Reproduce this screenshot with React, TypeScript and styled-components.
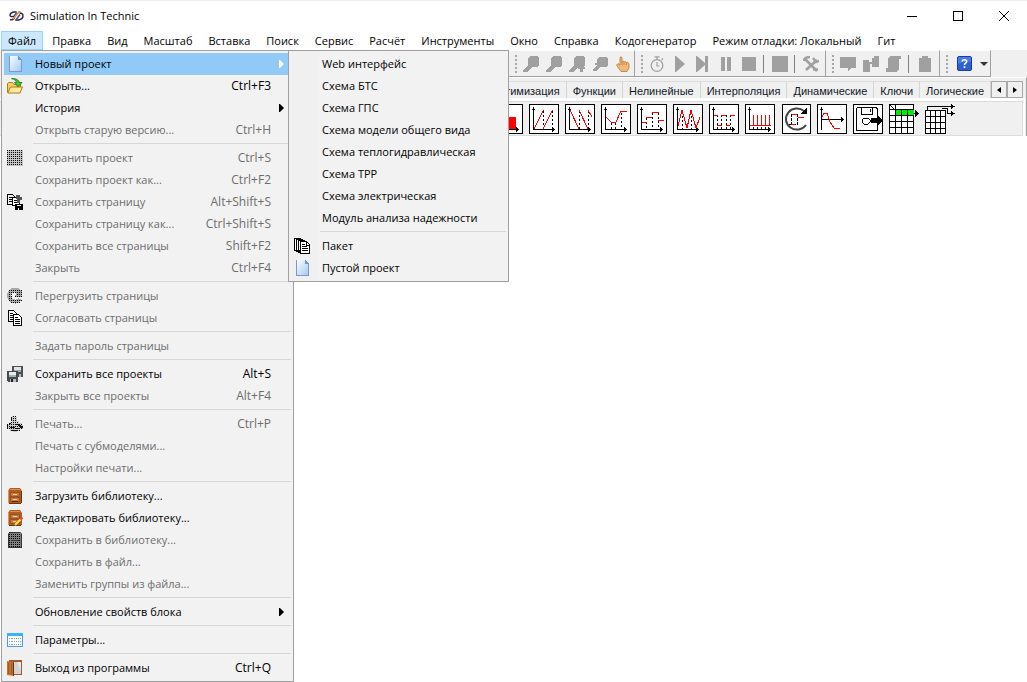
import React from "react";
import styled, { createGlobalStyle } from "styled-components";

const Global = createGlobalStyle`
  * { box-sizing: border-box; }
  body { margin: 0; background: #fff; overflow: hidden; }
  button { font: inherit; color: inherit; border: 0; margin: 0; padding: 0; background: none; text-align: left; }
  svg { display: block; flex: none; }
`;

const Window = styled.div`
  position: relative;
  min-height: 100vh;
  background: #fff;
  color: #000;
  font-family: "Open Sans", "Noto Sans", sans-serif;
  font-size: 11px;
  line-height: 16px;
`;

const TitleBar = styled.header`
  display: flex;
  align-items: center;
  height: 31px;
  border-top: 1px solid #f0f0f0;
  padding-left: 8px;
`;
const Title = styled.h1`
  flex: 1;
  margin: 0;
  padding-left: 6px;
  font-size: 11px;
  font-weight: 400;
`;
const Caption = styled.button`
  display: grid;
  place-items: center;
  width: 46px;
  height: 30px;
`;

const MenuBar = styled.nav`
  display: flex;
  gap: 2px;
  height: 19px;
  padding-left: 1px;
  white-space: nowrap;
`;
const MenuTitle = styled.button<{ $open?: boolean }>`
  padding: 0 6px;
  border: 1px solid ${(p) => (p.$open ? "#99d1ff" : "transparent")};
  background: ${(p) => (p.$open ? "#cce8ff" : "transparent")};
`;

const ToolArea = styled.div`
  background: #f0f0f0;
`;
const ToolRow = styled.div`
  display: flex;
  height: 27px;
  padding-left: 509px;
`;
const ToolGroup = styled.div<{ $tight?: boolean }>`
  display: flex;
  align-items: center;
  padding-right: ${(p) => (p.$tight ? 0 : 3)}px;
  border-top: 1px solid #fff;
  border-right: 1px solid #a0a0a0;
  border-bottom: 1px solid #a0a0a0;
`;
const Grip = styled.span`
  width: 10px;
  height: 20px;
  padding-left: 3px;
  background: radial-gradient(circle, #a8a8a8 1px, transparent 1px) 3px 0 / 2px 4px content-box no-repeat;
  background-repeat: no-repeat repeat;
`;
const ToolButton = styled.button<{ $w?: number }>`
  display: grid;
  place-items: center;
  width: ${(p) => p.$w ?? 23}px;
  height: 22px;
  color: #a0a0a0;
`;
const ToolRule = styled.span`
  width: 1px;
  height: 18px;
  margin: 0 4px 0 3px;
  background: #808080;
`;

const Palette = styled.div`
  border-right: 1px solid #a0a0a0;
  border-top: 1px solid #fff;
  padding: 3px 3px 0 0;
`;
const TabStrip = styled.div`
  display: flex;
  justify-content: flex-end;
  height: 17px;
  overflow: hidden;
  color: #101828;
  font-family: "Liberation Sans", "Noto Sans", sans-serif;
  font-size: 11px;
  line-height: 18px;
  white-space: nowrap;
`;
const Tab = styled.button`
  padding: 0 6px;
  border-top: 1px solid #dcdcdc;
  border-right: 1px solid #d5d5d5;
`;
const Scroll = styled.button`
  display: grid;
  place-items: center;
  width: 16px;
  height: 17px;
  border: 1px solid #a8a8a8;
`;
const Blocks = styled.div`
  display: flex;
  gap: 6px;
  height: 38px;
  padding: 3px 0 0 493px;
  border-top: 3px solid #fff;
  border-right: 1px solid #dcdcdc;
  border-bottom: 1px solid #dcdcdc;
  box-shadow: inset 0 1px #dcdcdc, 2px 0 #fff;
`;
const Block = styled.button`
  width: 30px;
  height: 30px;
`;

const Menu = styled.div<{ $sub?: boolean }>`
  position: absolute;
  top: 50px;
  left: ${(p) => (p.$sub ? 288 : 1)}px;
  width: ${(p) => (p.$sub ? 221 : 293)}px;
  padding: 2px;
  border: 1px solid #a0a0a0;
  background: linear-gradient(90deg, #f0f0f0 30px, #f2f2f2 30px);
`;
const Item = styled.button<{ $active?: boolean }>`
  display: flex;
  align-items: center;
  width: 100%;
  height: 22px;
  padding-left: 3px;
  white-space: nowrap;
  background: ${(p) => (p.$active ? "#91c9f7" : "transparent")};
  &:disabled { color: #6d6d6d; }
`;
const IconSlot = styled.span`
  width: 28px;
`;
const Label = styled.span`
  flex: 1;
`;
const Shortcut = styled.span`
  padding-right: 20px;
  font-size: 12px;
`;
const Arrow = styled.svg`
  margin-right: 7px;
`;
const Rule = styled.hr`
  height: 6px;
  margin: 0 0 0 29px;
  border: 0;
  background: linear-gradient(#d7d7d7, #d7d7d7) 0 2px / 100% 1px no-repeat;
`;

const Pic = ({ s = 16, children }: { s?: number; children: React.ReactNode }) => (
  <svg width={s} height={s} viewBox={`0 0 ${s} ${s}`} fill="none" shapeRendering="crispEdges" aria-hidden>
    {children}
  </svg>
);

const icons: Record<string, React.ReactNode> = {
  page: (
    <Pic>
      <path d="M2 0h10l3 3v13H2z" fill="url(#paper)" shapeRendering="auto" />
      <path d="M2.500 0v15.500H14.500V4" stroke="#8296c4" />
      <path d="M11 0v4h4z" fill="#6e96cc" />
    </Pic>
  ),
  open: (
    <svg width="16" height="16" viewBox="0 0 16 16" aria-hidden>
      <path d="M.5 14.500V5.500l1-1h4l1.500 2h6.500v3" fill="#f3cf62" stroke="#ad7b18" />
      <path d="M.8 15 3.500 9h12l-2.500 6z" fill="#ffe99b" stroke="#ad7b18" />
      <path d="M4.500.6C9 .2 12 2 12.300 4.500H15L11 9 7.500 4.500h2C9.300 2.500 7.500 1.300 4.500.6z" fill="#4dc52d" stroke="#17780e" strokeWidth=".8" />
    </svg>
  ),
  saveDots: (
    <Pic>
      <path d="M0 0h16v16H0z" fill="#c4c4c4" />
      <path d="M0 0h16v16H0z" fill="url(#dots)" />
    </Pic>
  ),
  savePage: (
    <Pic>
      <path d="M.5.5h5l2 2v8h-7zM2 3.500h3M2 5.500h4M2 7.500h4" stroke="#000" />
      <path d="M5.500 3.500h5l2 2v6h-7z" fill="#fff" stroke="#000" />
      <path d="M7 6.500h3M7 8.500h4" stroke="#000" />
      <path d="M9 1h4v2h2v3h-2v3h-3z" fill="#555" />
      <path d="M8 10h8v6H8z" fill="#000" />
      <path d="M10 11h4v1h-4zM11 14h1v2h-1z" fill="#eee" />
    </Pic>
  ),
  reload: (
    <Pic>
      <path d="M12 3A6 6 0 1 0 13 11" stroke="#aaa" strokeWidth="4" />
      <path d="M8 2h7v7H8z" fill="#aaa" />
      <path d="M3 1h12v8H9v2h6v3l-4 2H4l-3-4V4z" fill="url(#dots)" />
      <path d="M6 5h3v2H7v3h3v1H6z" fill="#fff" />
    </Pic>
  ),
  pages: (
    <Pic>
      <path d="M1.500.5h5l3 3v8h-8z" fill="#f5f5f5" stroke="#000" />
      <path d="M3 3.500h3M3 5.500h4M3 7.500h4M3 9.500h3" stroke="#000" />
      <path d="M6.500 4.500h5l3 3v8h-8z" fill="#fff" stroke="#000" />
      <path d="M8 7.500h3M8 9.500h5M8 11.500h5M8 13.500h5" stroke="#000" />
    </Pic>
  ),
  saveAll: (
    <Pic>
      <path d="M5 0h11v10l-1 1H5z" fill="#4c5252" />
      <path d="M7 1h7v3H7z" fill="#dce7e9" />
      <path d="M7 4h7v2H7z" fill="#9fabab" />
      <path d="M12 8h2v3h-2z" fill="#b4bbbb" />
      <path d="M0 5h11v11H1l-1-1z" fill="#454b4b" />
      <path d="M2 6h7v3H2z" fill="#e4eeee" />
      <path d="M2 9h7v2H2z" fill="#a3b0b0" />
      <path d="M3 13h6v3H3z" fill="#b5bcbc" />
      <path d="M4 13h2v3H4z" fill="#222" />
    </Pic>
  ),
  print: (
    <Pic>
      <path d="M5 0h4v1h1v4h2v2h3v2h1v4h-3v2h-3v1H6v-1H3v-2H0V8h3V6h2z" fill="#c9c9c9" />
      <path d="M5 0h4v1h1v4h2v2h3v2h1v4h-3v2h-3v1H6v-1H3v-2H0V8h3V6h2z" fill="url(#dots)" />
      <path d="M4 1h1v4H4zM2 7h2v1H2zM0 9h1v3H0zM9 8h3v1H9zM11 9h3v1h-3zM13 10h3v2h-3zM3 11h5v1H3zM8 12h5v1H8zM5 14h6v1H5z" fill="#111" />
    </Pic>
  ),
  cabinet: (
    <Pic>
      <path d="M3 0h10l2 3v12H1V3z" fill="#b35c22" shapeRendering="auto" />
      <path d="M3 1h10v1H3zM1 3h1v12H1z" fill="#dc9153" />
      <path d="M14 3h1v12h-1zM2 15h12v1H2z" fill="#713409" />
      <path d="M3.500 4.500h9v4h-9zM3.500 9.500h9v4h-9z" fill="#c97a3b" stroke="#9a5220" />
      <path d="M6 6h4v1H6zM6 11h4v1H6z" fill="#f3d1a8" />
      <path d="M5 13h6v1H5z" fill="#4e2307" />
    </Pic>
  ),
  cabinetEdit: (
    <Pic>
      <path d="M3 0h10l2 3v12H1V3z" fill="#b35c22" shapeRendering="auto" />
      <path d="M3 1h10v1H3zM1 3h1v12H1z" fill="#dc9153" />
      <path d="M2 15h12v1H2z" fill="#713409" />
      <path d="M3.500 4.500h9v4h-9zM3.500 9.500h9v4h-9z" fill="#c97a3b" stroke="#9a5220" />
      <path d="M6 6h4v1H6zM6 11h3v1H6z" fill="#f3d1a8" />
      <path d="m8 15 6-6" stroke="#f9df50" strokeWidth="2" shapeRendering="auto" />
      <path d="m13.500 9.500 2-2" stroke="#e4413d" strokeWidth="2" shapeRendering="auto" />
    </Pic>
  ),
  cabinetDots: (
    <Pic>
      <path d="M2 0h12l1 2v14H1V2z" fill="#808080" />
      <path d="M2 0h12l1 2v14H1V2z" fill="url(#dots)" />
      <path d="M1.500 2v13.500h13V2M3 .5h10M4 8.500h8" stroke="#333" />
    </Pic>
  ),
  params: (
    <Pic>
      <path d="M.5 1.500h15v13H.5z" fill="#f4faff" stroke="#4d9bd0" />
      <path d="M0 1h16v3H0z" fill="#3eb1f1" />
      <path d="M2 6.500h1M4 6.500h2M7 6.500h1M9 6.500h1M11 6.500h1M13 6.500h1M2 9.500h1M4 9.500h2M7 9.500h1M9 9.500h1M11 9.500h1M13 9.500h1M2 12.500h1M4 12.500h2M7 12.500h1M9 12.500h1M11 12.500h1M13 12.500h1" stroke="#8ba5b8" />
      <path d="M2 6h1v1H2zM7 9h1v1H7z" fill="#e98836" />
      <path d="M9 6h1v1H9zM11 12h1v1h-1z" fill="#55a950" />
    </Pic>
  ),
  exit: (
    <svg width="16" height="16" viewBox="0 0 16 16" aria-hidden>
      <path d="M2 0h13v15H2z" fill="#a5592b" />
      <path d="M7 2h7v12H7z" fill="#cfd3d6" />
      <path d="M10 2h4v9z" fill="#e6e9ea" />
      <path d="m0 1 7 1.500V16l-7-1z" fill="#c0702f" />
      <path d="M1.500 3v11M4.500 3.500V14.500" stroke="#a35822" />
      <path d="M6.500 2.500V16" stroke="#63310f" />
    </svg>
  ),
  packet: (
    <Pic>
      <path d="M.5.5h6v12h-6zM2.500 1.500h6v12h-6zM4.500 2.500h6v12h-6z" fill="#fff" stroke="#000" />
      <path d="M6.500 3.500h6l3 3v9h-9z" fill="#fff" stroke="#000" />
      <path d="M8 6.500h3M8 8.500h5M8 10.500h6M8 12.500h6M12.500 4v3H15" stroke="#000" />
    </Pic>
  ),
};

type Entry = "-" | { t: string; k?: string; i?: string; off?: boolean; more?: boolean; on?: boolean };
const fileMenu: Entry[] = [
  { t: "Новый проект", i: "page", more: true, on: true },
  { t: "Открыть...", k: "Ctrl+F3", i: "open" },
  { t: "История", more: true },
  { t: "Открыть старую версию...", k: "Ctrl+H", off: true },
  "-",
  { t: "Сохранить проект", k: "Ctrl+S", i: "saveDots", off: true },
  { t: "Сохранить проект как...", k: "Ctrl+F2", off: true },
  { t: "Сохранить страницу", k: "Alt+Shift+S", i: "savePage", off: true },
  { t: "Сохранить страницу как...", k: "Ctrl+Shift+S", off: true },
  { t: "Сохранить все страницы", k: "Shift+F2", off: true },
  { t: "Закрыть", k: "Ctrl+F4", off: true },
  "-",
  { t: "Перегрузить страницы", i: "reload", off: true },
  { t: "Согласовать страницы", i: "pages", off: true },
  "-",
  { t: "Задать пароль страницы", off: true },
  "-",
  { t: "Сохранить все проекты", k: "Alt+S", i: "saveAll" },
  { t: "Закрыть все проекты", k: "Alt+F4", off: true },
  "-",
  { t: "Печать...", k: "Ctrl+P", i: "print", off: true },
  { t: "Печать с субмоделями...", off: true },
  { t: "Настройки печати...", off: true },
  "-",
  { t: "Загрузить библиотеку...", i: "cabinet" },
  { t: "Редактировать библиотеку...", i: "cabinetEdit" },
  { t: "Сохранить в библиотеку...", i: "cabinetDots", off: true },
  { t: "Сохранить в файл...", off: true },
  { t: "Заменить группы из файла...", off: true },
  "-",
  { t: "Обновление свойств блока", more: true },
  "-",
  { t: "Параметры...", i: "params" },
  "-",
  { t: "Выход из программы", k: "Ctrl+Q", i: "exit" },
];
const projectMenu: Entry[] = [
  { t: "Web интерфейс" },
  { t: "Схема БТС" },
  { t: "Схема ГПС" },
  { t: "Схема модели общего вида" },
  { t: "Схема теплогидравлическая" },
  { t: "Схема ТРР" },
  { t: "Схема электрическая" },
  { t: "Модуль анализа надежности" },
  "-",
  { t: "Пакет", i: "packet" },
  { t: "Пустой проект", i: "page" },
];

const MenuList = ({ entries, sub }: { entries: Entry[]; sub?: boolean }) => (
  <Menu $sub={sub} role="menu">
    {entries.map((e, n) =>
      e === "-" ? (
        <Rule key={n} />
      ) : (
        <Item key={n} role="menuitem" disabled={e.off} $active={e.on}>
          <IconSlot>{e.i && icons[e.i]}</IconSlot>
          <Label>{e.t}</Label>
          {e.k && <Shortcut>{e.k}</Shortcut>}
          {e.more && (
            <Arrow width="5" height="8" viewBox="0 0 5 8">
              <path d="M0 0h1l4 4-4 4H0z" fill={e.on ? "#fff" : "#000"} />
            </Arrow>
          )}
        </Item>
      ),
    )}
  </Menu>
);

const solid = (d: string) => <path d={d} fill="currentColor" />;
const glass = solid("M7 0h7l2 2v7l-2 2H9l-5 5H0v-2l5-5V2z");
const tools: Record<string, React.ReactNode> = {
  zoom: <Pic>{glass}</Pic>,
  zoomStar: <Pic>{glass}{solid("M9 11h2V9h3v2h2v2h-2v3h-3v-3H9z")}</Pic>,
  zoomBack: <Pic>{solid("M7 1h7l2 2v6l-2 2H8l-4 4H1v-2l4-4H3V7h2V3z")}</Pic>,
  hand: (
    <svg width="16" height="16" viewBox="0 0 16 16">
      <path d="M5 9V1.500Q6 .2 7 1.500V6l1.500-1 1 1 1-.5 1 1 1-.3L14 7.500V12l-2 3.500H6L3.500 12 1.500 9 3 7.500z" fill="#efb77c" stroke="#b87634" strokeWidth=".8" />
      <path d="M9 6v3M11.300 6.500V9M7 6v3" stroke="#b87634" strokeWidth=".7" />
    </svg>
  ),
  watch: (
    <svg width="16" height="16" viewBox="0 0 16 16" fill="none" stroke="currentColor">
      <circle cx="8" cy="9.500" r="5.800" strokeWidth="1.300" />
      <path d="M5.500.8h5M8 1v3M8 6v4h2.500M12.500 4l1.500-1.500" strokeWidth="1.200" />
    </svg>
  ),
  play: <svg width="10" height="16" viewBox="0 0 10 16">{solid("M0 0h1l9 8-9 8H0z")}</svg>,
  step: <svg width="13" height="16" viewBox="0 0 13 16">{solid("M0 0h1l8 7V0h3v16H9V9l-8 7H0z")}</svg>,
  pause: <Pic>{solid("M3 1h4v14H3zM9 1h4v14H9z")}</Pic>,
  stop: <Pic>{solid("M1 1h14v14H1z")}</Pic>,
  board: <Pic>{solid("M0 0h16v16H0z")}</Pic>,
  repair: (
    <svg width="16" height="16" viewBox="0 0 16 16" fill="none" stroke="currentColor">
      <path d="m2 3 12 12M14 4 3 14" strokeWidth="2.600" />
      <path d="M1 5q0-4 6-4M10 2l3 4 3-1M10 13.500h5" strokeWidth="2.400" />
    </svg>
  ),
  note: <Pic>{solid("M0 1h16v11h-5l-3 3v-3H0z")}</Pic>,
  find: <Pic>{solid("M0 4h6v2h3V2h2V0h5v11H9V8H7v8H0z")}</Pic>,
  script: <Pic>{solid("M4 0h11v3h-2v10l-2 3H0v-4h2V3z")}</Pic>,
  clip: <Pic>{solid("M2 2h3V0h6v2h3v14H2z")}</Pic>,
  help: (
    <svg width="15" height="15" viewBox="0 0 15 15">
      <rect x=".5" y=".5" width="14" height="14" rx="1.500" fill="#2b61d4" stroke="#1a3ca0" />
      <path d="M1 2Q1 1 2 1h11q1 0 1 1v4Q7 5 1 8z" fill="#5a8cf0" opacity=".6" />
      <path d="M5.300 5.500Q5.300 3.700 7.500 3.700T9.700 5.500Q9.700 6.500 8.500 7.200T7.500 9M7.500 10.200v1.800" fill="none" stroke="#fff" strokeWidth="1.600" />
    </svg>
  ),
  caret: <svg width="8" height="4" viewBox="0 0 8 4"><path d="M0 0h8L4 4z" fill="#333" /></svg>,
};
const T = ({ n, label, w }: { n: string; label: string; w?: number }) => (
  <ToolButton $w={w} aria-label={label}>{tools[n]}</ToolButton>
);

const Axes = () => (
  <>
    <path d="M.5.5h29v29H.5z" fill="#fff" stroke="#000" />
    <path d="M4.500 3v22.500H26M3 5.500h3M24.500 24v3M23.500 23v5" stroke="#000" />
  </>
);
const chart = (red: string, dash?: string) => (
  <Pic s={30}>
    <Axes />
    {dash && <path d={dash} stroke="#000" strokeDasharray="2 2" />}
    <path d={red} stroke="#f00" />
  </Pic>
);
const blocks: [string, React.ReactNode][] = [
  ["Импульс", <Pic s={30}><Axes /><path d="M13 13h10v12H13z" fill="#f00" /></Pic>],
  ["Пила", chart("M5 25 14.500 6M14 25 23.500 6", "M14.500 7v18M23.500 7v18")],
  ["Обратная пила", chart("M5 6 14 25M14 6l9 19M23 6l4 7", "M14.500 7v18M23.500 7v18")],
  ["Линейная", chart("M5 13l5 5h5l5-11h6", "M10.500 19v6M14.500 19v6M20.500 9v16")],
  ["Ступени", chart("M5 18.500h5M9 13.500h6M15 8.500h7M21 16.500h6", "M9.500 14v11M15.500 9v16M21.500 9v16")],
  ["Треугольник", chart("M5 22l4-16 5 18 4-18 5 18 4-11", "M9.500 8v17M18.500 8v17")],
  ["Меандр", chart("M5 11.500h4M12 11.500h5M21 11.500h5M8 21.500h5M17 21.500h4", "M8.500 11v14M12.500 11v14M17.500 11v14M21.500 11v14")],
  ["Импульсы", chart("M5 21.500h21M8.500 11v11M12.500 11v11M16.500 11v11M20.500 11v11M24.500 11v11", "M8.500 23v3M12.500 23v3M16.500 23v3M20.500 23v3")],
  ["Цикл", (
    <Pic s={30}>
      <path d="M1.500.5h28v29h-28z" fill="#fff" stroke="#000" />
      <path d="M23 7A11 10.500 0 1 0 25 21" stroke="#444" strokeWidth="2" shapeRendering="auto" />
      <path d="M26 4v6h-7z" fill="#000" />
      <path d="M10.500 10v10M16.500 10v11M8 20.500h9" stroke="#000" strokeDasharray="3 1" />
      <path d="M11 10.500h5M17 13.500h6M10 20.500h4" stroke="#f00" />
    </Pic>
  )],
  ["Переходный процесс", (
    <Pic s={30}>
      <path d="M.5.500h29v29H.5z" fill="#fff" stroke="#000" />
      <path d="M4.500 3v23M4 15.500h23M3 5.500h3M25.500 14v3M24.500 13v5" stroke="#000" />
      <path d="M5 13l2-4h3l3 9 4 6h6" stroke="#f00" />
    </Pic>
  )],
  ["Запись", (
    <Pic s={30}>
      <path d="M.5.5h29v29H.5z" fill="#fff" stroke="#000" />
      <path d="M3.500 3.500h20l1 2v5M24.500 22v4.500H3.500v-23M8.500 4v6.500h11V4M17.500 5v3" stroke="#000" />
      <path d="M11 14h4l2 2v2l-2 2h-4l-2-2v-2z" stroke="#000" />
      <path d="M18 14h6v-3l6 5.500-6 5.500v-3h-6z" fill="#000" />
    </Pic>
  )],
  ["Таблица", (
    <Pic s={30}>
      <path d="M.5.5h24v29H.5z" fill="#fff" stroke="#000" />
      <path d="M7 6h18v6H7z" fill="#0e0" />
      <path d="M0 5.500h25M0 11.500h25M0 17.500h25M0 23.500h25M6.500 0v30M12.500 5v25M18.500 5v25M0 0l6 6M25 9.500h4" stroke="#000" />
      <path d="M26 6l4 3.500-4 3.500z" fill="#000" />
    </Pic>
  )],
  ["Выбор из таблицы", (
    <Pic s={30}>
      <path d="M.5 6.500h20v23H.5z" fill="#fff" stroke="#000" />
      <path d="M0 12.500h21M0 18.500h21M0 24.500h21M5.500 6v24M10.500 6v24M15.500 6v24M2.500 6V2.500h24M17 4.500h5v5h5" stroke="#000" />
      <path d="M26 0l4 2.500-4 2.500zM26 7l4 2.500-4 2.500z" fill="#000" />
    </Pic>
  )],
];

const menuTitles = ["Файл", "Правка", "Вид", "Масштаб", "Вставка", "Поиск", "Сервис", "Расчёт", "Инструменты", "Окно", "Справка", "Кодогенератор", "Режим отладки: Локальный", "Гит"];
const tabs = ["Оптимизация", "Функции", "Нелинейные", "Интерполяция", "Динамические", "Ключи", "Логические"];

export default function App() {
  return (
    <Window>
      <Global />
      <svg width="0" height="0" style={{ position: "absolute" }} aria-hidden>
        <defs>
          <linearGradient id="paper" x2="1" y2="1">
            <stop stopColor="#fff" />
            <stop offset="1" stopColor="#9cc8f2" />
          </linearGradient>
          <pattern id="dots" width="2" height="2" patternUnits="userSpaceOnUse">
            <path d="M0 0h1v1H0z" fill="#000" />
          </pattern>
        </defs>
      </svg>
      <TitleBar>
        <svg width="16" height="16" viewBox="0 0 16 16" fill="none" aria-hidden>
          <path d="M8.500 4H5.500Q2 5 2 7t3 1.500Q7.500 8.500 6 10.500t-4 1" stroke="#26234f" strokeWidth="1.400" />
          <path d="M7.500 12H10.500Q15 11 15 8T11.500 5" stroke="#26234f" strokeWidth="1.400" />
          <path d="m7.500 12.500 4.500-6M6 8l3-3.500" stroke="#4c4a80" strokeWidth="1.500" />
          <path d="m5 11 6-7 1.500-.5" stroke="#e39235" strokeWidth="1.500" />
        </svg>
        <Title>Simulation In Technic</Title>
        <Caption aria-label="Свернуть"><Pic><path d="M3 8.500h10" stroke="#000" /></Pic></Caption>
        <Caption aria-label="Развернуть"><Pic><path d="M3.500 3.500h9v9h-9z" stroke="#000" /></Pic></Caption>
        <Caption aria-label="Закрыть">
          <svg width="16" height="16" viewBox="0 0 16 16"><path d="m3 3 10 10M13 3 3 13" stroke="#000" /></svg>
        </Caption>
      </TitleBar>
      <MenuBar>
        {menuTitles.map((m, n) => <MenuTitle key={m} $open={n === 0}>{m}</MenuTitle>)}
      </MenuBar>
      <ToolArea>
        <ToolRow>
          <ToolGroup $tight>
            <Grip />
            <T n="zoom" label="Увеличить" /><T n="zoom" label="Уменьшить" /><T n="zoomStar" label="Показать всё" />
            <T n="zoomBack" label="Прежний масштаб" /><T n="hand" label="Сдвиг" />
          </ToolGroup>
          <ToolGroup>
            <Grip />
            <T n="watch" label="Время" /><T n="play" label="Пуск" /><T n="step" label="Шаг" />
            <T n="pause" label="Пауза" /><T n="stop" label="Стоп" />
            <ToolRule />
            <T n="board" label="Панель" />
            <ToolRule />
            <T n="repair" label="Параметры расчёта" />
          </ToolGroup>
          <ToolGroup>
            <Grip />
            <T n="note" label="Сообщения" /><T n="find" label="Найти" /><T n="script" label="Скрипт" />
            <ToolRule />
            <T n="clip" label="Буфер" />
          </ToolGroup>
          <ToolGroup $tight>
            <Grip />
            <T n="help" label="Помощь" w={28} />
            <T n="caret" label="Ещё" w={12} />
          </ToolGroup>
        </ToolRow>
        <Palette>
          <TabStrip>
            {tabs.map((t) => <Tab key={t}>{t}</Tab>)}
            <Scroll aria-label="Влево"><svg width="4" height="6" viewBox="0 0 4 6"><path d="M4 0v6L0 3z" /></svg></Scroll>
            <Scroll aria-label="Вправо"><svg width="4" height="6" viewBox="0 0 4 6"><path d="M0 0v6l4-3z" /></svg></Scroll>
          </TabStrip>
          <Blocks>
            {blocks.map(([name, pic]) => <Block key={name} aria-label={name}>{pic}</Block>)}
          </Blocks>
        </Palette>
      </ToolArea>
      <MenuList entries={fileMenu} />
      <MenuList entries={projectMenu} sub />
    </Window>
  );
}
